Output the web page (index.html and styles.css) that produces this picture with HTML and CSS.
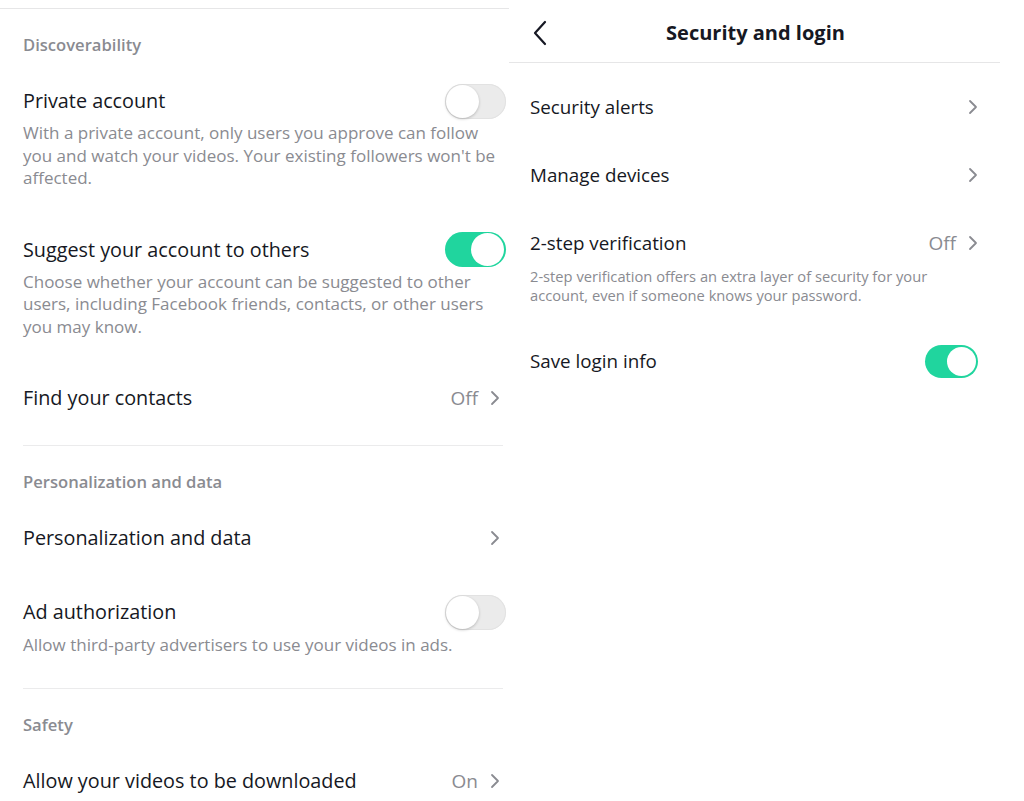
FILE: index.html
```html
<!DOCTYPE html>
<html>
<head>
<meta charset="utf-8">
<link rel="stylesheet" href="styles.css">
</head>
<body>
<div class="page">
  <div class="left">
    <div class="topline"></div>

    <div class="section first">
      <div class="sec-head">Discoverability</div>
      <div class="items">
        <div class="item">
          <div class="row">
            <div class="title">Private account</div>
            <div class="toggle off"><span class="knob"></span></div>
          </div>
          <div class="desc">With a private account, only users you approve can follow<br>you and watch your videos. Your existing followers won't be<br>affected.</div>
        </div>
        <div class="item">
          <div class="row">
            <div class="title">Suggest your account to others</div>
            <div class="toggle on"><span class="knob"></span></div>
          </div>
          <div class="desc">Choose whether your account can be suggested to other<br>users, including Facebook friends, contacts, or other users<br>you may know.</div>
        </div>
        <div class="item">
          <div class="row">
            <div class="title">Find your contacts</div>
            <div class="meta"><span class="val">Off</span><svg class="chev" width="10" height="16" viewBox="0 0 10 16"><polyline points="2,2 8,8 2,14" fill="none" stroke="#8a8b91" stroke-width="1.8" stroke-linecap="round" stroke-linejoin="round"/></svg></div>
          </div>
        </div>
      </div>
    </div>

    <div class="section personal">
      <div class="sec-head">Personalization and data</div>
      <div class="items">
        <div class="item">
          <div class="row">
            <div class="title">Personalization and data</div>
            <div class="meta"><svg class="chev" width="10" height="16" viewBox="0 0 10 16"><polyline points="2,2 8,8 2,14" fill="none" stroke="#8a8b91" stroke-width="1.8" stroke-linecap="round" stroke-linejoin="round"/></svg></div>
          </div>
        </div>
        <div class="item">
          <div class="row">
            <div class="title">Ad authorization</div>
            <div class="toggle off"><span class="knob"></span></div>
          </div>
          <div class="desc">Allow third-party advertisers to use your videos in ads.</div>
        </div>
      </div>
    </div>

    <div class="section last">
      <div class="sec-head">Safety</div>
      <div class="items">
        <div class="item">
          <div class="row">
            <div class="title">Allow your videos to be downloaded</div>
            <div class="meta"><span class="val">On</span><svg class="chev" width="10" height="16" viewBox="0 0 10 16"><polyline points="2,2 8,8 2,14" fill="none" stroke="#8a8b91" stroke-width="1.8" stroke-linecap="round" stroke-linejoin="round"/></svg></div>
          </div>
        </div>
      </div>
    </div>
  </div>

  <div class="right">
    <div class="header">
      <svg class="back" width="16" height="26" viewBox="0 0 16 26"><polyline points="13,2 3,13 13,24" fill="none" stroke="#161823" stroke-width="2.2" stroke-linecap="round" stroke-linejoin="round"/></svg>
      <div class="htitle">Security and login</div>
    </div>
    <div class="rlist">
      <div class="ritem">
        <div class="row">
          <div class="title">Security alerts</div>
          <div class="meta"><svg class="chev" width="10" height="16" viewBox="0 0 10 16"><polyline points="2,2 8,8 2,14" fill="none" stroke="#8a8b91" stroke-width="1.8" stroke-linecap="round" stroke-linejoin="round"/></svg></div>
        </div>
      </div>
      <div class="ritem">
        <div class="row">
          <div class="title">Manage devices</div>
          <div class="meta"><svg class="chev" width="10" height="16" viewBox="0 0 10 16"><polyline points="2,2 8,8 2,14" fill="none" stroke="#8a8b91" stroke-width="1.8" stroke-linecap="round" stroke-linejoin="round"/></svg></div>
        </div>
      </div>
      <div class="ritem">
        <div class="row">
          <div class="title">2-step verification</div>
          <div class="meta"><span class="val">Off</span><svg class="chev" width="10" height="16" viewBox="0 0 10 16"><polyline points="2,2 8,8 2,14" fill="none" stroke="#8a8b91" stroke-width="1.8" stroke-linecap="round" stroke-linejoin="round"/></svg></div>
        </div>
        <div class="rdesc">2-step verification offers an extra layer of security for your<br>account, even if someone knows your password.</div>
      </div>
      <div class="ritem">
        <div class="row">
          <div class="title">Save login info</div>
          <div class="toggle on small"><span class="knob"></span></div>
        </div>
      </div>
    </div>
  </div>
</div>
</body>
</html>
```

FILE: styles.css
```css
* { box-sizing: border-box; }
html, body {
  margin: 0;
  padding: 0;
  background: #ffffff;
}
body {
  font-family: "Open Sans", "Noto Sans", sans-serif;
  color: #161823;
  width: 1024px;
  height: 801px;
  overflow: hidden;
}
.page {
  display: flex;
  width: 1024px;
  height: 801px;
}
.left {
  width: 509px;
  padding-top: 8px;
}
.topline {
  height: 1px;
  background: #e6e6e7;
}
.section {
  margin: 0 6px 0 23px;
  border-bottom: 1px solid #ebebec;
  padding-top: 25px;
}
.section.last { border-bottom: none; }
.sec-head {
  font-size: 16.6px;
  line-height: 22px;
  font-weight: 600;
  color: #8a8b91;
}
.items {
  display: flex;
  flex-direction: column;
  gap: 48px;
  padding-top: 33px;
  padding-bottom: 35px;
}
.personal .items {
  gap: 50px;
  padding-bottom: 31px;
}
.personal .desc { margin-top: 10px; }
.row {
  display: flex;
  align-items: center;
  justify-content: space-between;
  height: 24px;
}
.title {
  font-size: 19.8px;
  line-height: 24px;
  color: #161823;
}
.desc {
  margin-top: 9px;
  font-size: 17px;
  line-height: 22.5px;
  color: #8a8b91;
}
.meta {
  display: flex;
  align-items: center;
  gap: 12px;
  padding-right: 3px;
}
.val {
  font-size: 19px;
  color: #8a8b91;
}
.chev { display: block; }
.toggle {
  position: relative;
  width: 61px;
  height: 35px;
  border-radius: 18px;
  margin-right: -3px;
  flex: none;
}
.toggle.off {
  background: #ebebeb;
  box-shadow: inset 0 0 0 1px #e2e2e2;
}
.toggle.on {
  background: #20d59e;
}
.knob {
  position: absolute;
  top: 1px;
  width: 33px;
  height: 33px;
  border-radius: 50%;
  background: #ffffff;
  box-shadow: 0 1px 3px rgba(0,0,0,0.22);
}
.toggle.off .knob { left: 1px; }
.toggle.on .knob { right: 2px; box-shadow: none; }
.toggle.small {
  width: 53px;
  height: 33px;
  margin-right: 0;
}
.toggle.small .knob {
  width: 29px;
  height: 29px;
  top: 2px;
  right: 2px;
}

.right {
  width: 491px;
}
.header {
  height: 63px;
  border-bottom: 1px solid #e6e6e7;
  display: flex;
  align-items: center;
  position: relative;
  padding-left: 23px;
  padding-bottom: 1px;
}
.back {
  display: block;
  margin-top: 4px;
}
.htitle {
  position: absolute;
  left: 0;
  right: 0;
  top: 19px;
  text-align: center;
  font-size: 20px;
  line-height: 28px;
  font-weight: 700;
  color: #161823;
  padding-left: 2px;
}
.rlist {
  padding: 10px 22px 0 21px;
}
.ritem {
  padding: 22px 0;
}
.ritem .title { font-size: 18.8px; }
.ritem .meta { padding-right: 0; }
.rdesc {
  margin-top: 12px;
  font-size: 14.7px;
  line-height: 19px;
  color: #8a8b91;
}
```
